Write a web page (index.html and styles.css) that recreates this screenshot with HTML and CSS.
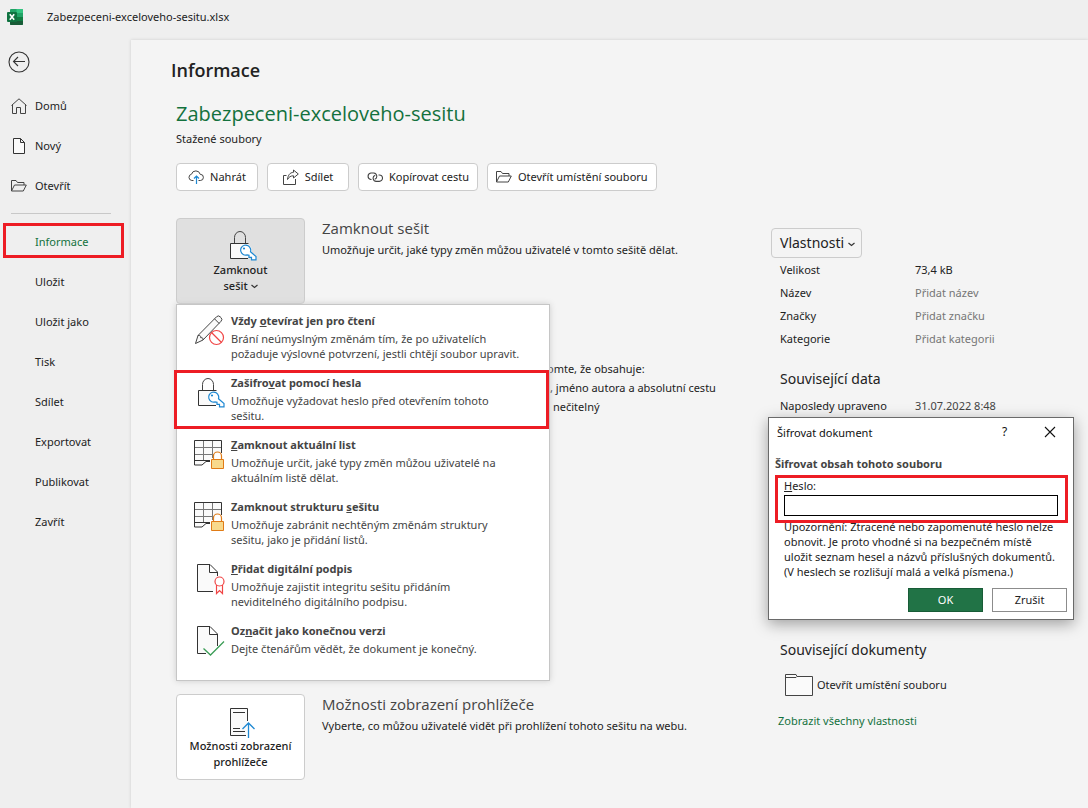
FILE: index.html
```html
<!DOCTYPE html>
<html lang="cs">
<head>
<meta charset="utf-8">
<meta name="viewport" content="width=device-width, initial-scale=1">
<title>Zabezpeceni-exceloveho-sesitu.xlsx</title>
<link rel="stylesheet" href="styles.css">
</head>
<body>
<svg class="defs" aria-hidden="true">
  <symbol id="folder" viewBox="0 0 16 16">
    <path d="M.5 13V2.500h4.500l1.500 2h6.500V7M.5 13L3.500 7h11.800l-3 6z" fill="none" stroke="#444"/>
  </symbol>
  <symbol id="lock-key" viewBox="0 0 28 32">
    <path d="M5.500 13V7.500a5.500 6 0 0 1 11 0V13" fill="none" stroke="#444"/>
    <path d="M19.500 13.500H1.500v15H19" fill="#fafafa" stroke="#333"/>
    <circle cx="16.500" cy="20.500" r="6.500" fill="#fafafa"/>
    <path d="M21.500 18.800a5 5 0 1 0-3.500 6.100l2 .4v2h2.500v2.500h4.500v-3.300L21.500 21.800a5 5 0 0 0 0-3z" fill="#fff" stroke="#1e88d2" stroke-width="1.200"/>
    <circle cx="15" cy="18.500" r="1.100" fill="#1e88d2"/>
  </symbol>
  <symbol id="grid-lock" viewBox="0 0 32 32">
    <path d="M.5 1.500h27v20.500H12l-4 4H.5z" fill="#fafafa"/>
    <path d="M9.500 2v20M18.500 2v20M1 8.500h26M1 15.500h26" fill="none" stroke="#777"/>
    <path d="M27.500 14V1.500H.5V26H8l4-3.500h5M.5 21.500H17" fill="none" stroke="#333"/>
    <path d="M16 19h15v12H16z" fill="#fff"/>
    <path d="M19.500 20.500V17a4 4 0 0 1 8 0v3.500" fill="#fff" stroke="#e07b16" stroke-width="1.200"/>
    <path d="M17.500 20.500h12v9h-12z" fill="#f8d98c" stroke="#e07b16"/>
  </symbol>
</svg>

<header class="titlebar">
  <svg class="logo" viewBox="0 0 16 16" role="img" aria-label="Excel">
    <rect x="3" y="0" width="13" height="16" rx="1" fill="#21a366"/>
    <path d="M3 4h6.500v4H3z" fill="#107c41"/>
    <path d="M9.500 0H15a1 1 0 0 1 1 1v3H9.500z" fill="#33c481"/>
    <path d="M3 8h13v4H3z" fill="#107c41"/>
    <path d="M3 12h13v3a1 1 0 0 1-1 1H4a1 1 0 0 1-1-1z" fill="#185c37"/>
    <rect x="0" y="3" width="10" height="10" rx="1" fill="#0f7340"/>
    <path d="M2.800 5.200l4.400 5.600M7.200 5.200l-4.400 5.600" stroke="#fff" stroke-width="1.600"/>
  </svg>
  <span>Zabezpeceni-exceloveho-sesitu.xlsx</span>
</header>

<div class="shell">
  <nav class="sidebar" aria-label="Soubor">
    <button class="back" type="button" aria-label="Zpět">
      <svg viewBox="0 0 22 22"><circle cx="11" cy="11" r="10" fill="none" stroke="#333" stroke-width="1.100"/><path d="M17 10.500H5.500M10 6L5.500 10.500 10 15" fill="none" stroke="#333" stroke-width="1.100"/></svg>
    </button>
    <a class="nav-item" href="#">
      <svg viewBox="0 0 16 16"><path d="M.5 7.500L8 .8l7.500 6.700M1.500 6.500v9h4V9.500h4v6h5v-9" fill="none" stroke="#444"/></svg>Domů</a>
    <a class="nav-item" href="#">
      <svg viewBox="0 0 16 16"><path d="M2.500.5h7l4 4v11h-11zM9.500.5v4h4" fill="#fafafa" stroke="#333"/></svg>Nový</a>
    <a class="nav-item" href="#"><svg><use href="#folder"/></svg>Otevřít</a>
    <hr class="nav-line">
    <a class="nav-item plain current marked" href="#" aria-current="page">Informace</a>
    <a class="nav-item plain" href="#">Uložit</a>
    <a class="nav-item plain" href="#">Uložit jako</a>
    <a class="nav-item plain" href="#">Tisk</a>
    <a class="nav-item plain" href="#">Sdílet</a>
    <a class="nav-item plain" href="#">Exportovat</a>
    <a class="nav-item plain" href="#">Publikovat</a>
    <a class="nav-item plain" href="#">Zavřít</a>
  </nav>

  <main class="main">
    <h1>Informace</h1>
    <div class="content">
      <h2 class="doc-name">Zabezpeceni-exceloveho-sesitu</h2>
      <p class="doc-place">Stažené soubory</p>
      <div class="actions">
        <button class="action" type="button">
          <svg viewBox="0 0 16 16"><path d="M5.500 11.500H3.800a3.200 3.200 0 0 1-.3-6.300A4.500 4.500 0 0 1 12.200 5.300a3.100 3.100 0 0 1 .2 6.200h-1.900" fill="none" stroke="#444"/><path d="M8.500 15V7M6 9.500L8.500 7 11 9.500" fill="none" stroke="#1e88d2" stroke-width="1.200"/></svg>Nahrát</button>
        <button class="action" type="button">
          <svg viewBox="0 0 16 16"><path d="M3.500 6.500h-3v9h12V10" fill="none" stroke="#444"/><path d="M10.500 1l4.800 4-4.800 4V6.800C7.500 6.800 6 8 4.500 10.500 5 6 7 3.500 10.500 3.300z" fill="#fafafa" stroke="#444"/></svg>Sdílet</button>
        <button class="action" type="button">
          <svg viewBox="0 0 16 16"><path d="M4.500 10.500H3.800a3.300 3.300 0 0 1 0-6.500h3a3.300 3.300 0 0 1 1 6.300M11.500 6h.8a3.200 3.200 0 0 1 0 6.400H9.200a3.200 3.200 0 0 1-1-6.200" fill="none" stroke="#444" stroke-width="1.100"/></svg>Kopírovat cestu</button>
        <button class="action" type="button"><svg><use href="#folder"/></svg>Otevřít umístění souboru</button>
      </div>

      <div class="columns">
        <div class="tasks">
          <section class="task">
            <button class="tile pressed" type="button" aria-haspopup="menu" aria-expanded="true">
              <svg class="lock-icon"><use href="#lock-key"/></svg>
              <span>Zamknout<br>sešit <svg class="chev" viewBox="0 0 7 5"><path d="M.5 1l3 2.500 3-2.500" fill="none" stroke="#333" stroke-width="1.200"/></svg></span>
            </button>
            <div class="task-text">
              <h3>Zamknout sešit</h3>
              <p>Umožňuje určit, jaké typy změn můžou uživatelé v tomto sešitě dělat.</p>
            </div>
            <div class="menu" role="menu">
              <button class="menu-item" type="button" role="menuitem">
                <svg viewBox="0 0 32 32"><path d="M1.500 28.500l2.500-8L22.500 1.800a2.600 2.600 0 0 1 3.700 0l.8.800a2.600 2.600 0 0 1 0 3.700L9 25zM4 20.500c2-.3 3 .5 2.700 2.200 2-.2 2.600.6 2.300 2.300M20.500 3.800l4.700 4.700" fill="#fafafa" stroke="#444"/><circle cx="22.500" cy="22.500" r="7" fill="#fff" stroke="#f04545" stroke-width="1.200"/><path d="M17.500 17.500l10 10" stroke="#f04545" stroke-width="1.200"/></svg>
                <span class="menu-text"><b>Vždy <u>o</u>tevírat jen pro čtení</b><span>Brání neúmyslným změnám tím, že po uživatelích<br>požaduje výslovné potvrzení, jestli chtějí soubor upravit.</span></span>
              </button>
              <button class="menu-item marked" type="button" role="menuitem">
                <svg class="lock-icon"><use href="#lock-key"/></svg>
                <span class="menu-text"><b>Zašifro<u>v</u>at pomocí hesla</b><span>Umožňuje vyžadovat heslo před otevřením tohoto<br>sešitu.</span></span>
              </button>
              <button class="menu-item" type="button" role="menuitem">
                <svg><use href="#grid-lock"/></svg>
                <span class="menu-text"><b><u>Z</u>amknout aktuální list</b><span>Umožňuje určit, jaké typy změn můžou uživatelé na<br>aktuálním listě dělat.</span></span>
              </button>
              <button class="menu-item" type="button" role="menuitem">
                <svg><use href="#grid-lock"/></svg>
                <span class="menu-text"><b>Zamknout strukturu <u>s</u>ešitu</b><span>Umožňuje zabránit nechtěným změnám struktury<br>sešitu, jako je přidání listů.</span></span>
              </button>
              <button class="menu-item" type="button" role="menuitem">
                <svg viewBox="0 0 32 32"><path d="M19 28.500H3.500v-27H16l7.500 7.500v4M15.500 1.500V9.500h8" fill="#fafafa" stroke="#333"/><circle cx="25.500" cy="18.500" r="4.500" fill="#fff" stroke="#f04545" stroke-width="1.200"/><path d="M22.500 22v8.500l3-3 3 3V22" fill="none" stroke="#f04545" stroke-width="1.200"/></svg>
                <span class="menu-text"><b><u>P</u>řidat digitální podpis</b><span>Umožňuje zajistit integritu sešitu přidáním<br>neviditelného digitálního podpisu.</span></span>
              </button>
              <button class="menu-item" type="button" role="menuitem">
                <svg viewBox="0 0 32 32"><path d="M12 28.500H3.500v-27H16l7.500 7.500V21M15.500 1.500V9.500h8" fill="#fafafa" stroke="#333"/><path d="M9.500 23.500l7 6.500L30 16.500" fill="none" stroke="#3c9d57" stroke-width="1.300"/></svg>
                <span class="menu-text"><b>Oz<u>n</u>ačit jako konečnou verzi</b><span>Dejte čtenářům vědět, že dokument je konečný.</span></span>
              </button>
            </div>
          </section>

          <section class="inspect">
            <p>omte, že obsahuje:</p>
            <p class="inset">, jméno autora a absolutní cestu</p>
            <p class="inset-more">nečitelný</p>
          </section>

          <section class="task">
            <button class="tile" type="button">
              <svg viewBox="0 0 28 32"><path d="M18.500 15V2.500h-17v27H17" fill="#fafafa" stroke="#333"/><path d="M4 6.500h12M4 22.500h7M4 25.500h12" fill="none" stroke="#333"/><path d="M19.500 32V17M13.500 23l6-6 6 6" fill="none" stroke="#1e88d2" stroke-width="1.300"/></svg>
              <span>Možnosti zobrazení<br>prohlížeče</span>
            </button>
            <div class="task-text">
              <h3>Možnosti zobrazení prohlížeče</h3>
              <p>Vyberte, co můžou uživatelé vidět při prohlížení tohoto sešitu na webu.</p>
            </div>
          </section>
        </div>

        <aside class="props">
          <button class="props-button" type="button">Vlastnosti <svg class="chev" viewBox="0 0 7 5"><path d="M.5 1l3 2.500 3-2.500" fill="none" stroke="#333" stroke-width="1.200"/></svg></button>
          <table class="facts">
            <tr><th scope="row">Velikost</th><td class="dark">73,4 kB</td></tr>
            <tr><th scope="row">Název</th><td>Přidat název</td></tr>
            <tr><th scope="row">Značky</th><td>Přidat značku</td></tr>
            <tr><th scope="row">Kategorie</th><td>Přidat kategorii</td></tr>
          </table>
          <section class="dates">
            <h3>Související data</h3>
            <table class="facts">
              <tr><th scope="row">Naposledy upraveno</th><td class="date">31.07.2022 8:48</td></tr>
            </table>
          </section>
          <section class="related">
            <h3>Související dokumenty</h3>
            <a class="open-place" href="#">
              <svg viewBox="0 0 28 22"><path d="M.5.500h10.500l1 2h15.500v19H.5z" fill="#fafafa" stroke="#444"/><path d="M.5 3.500h10.500l1-1" fill="none" stroke="#444"/></svg>Otevřít umístění souboru</a>
            <a class="all-props" href="#">Zobrazit všechny vlastnosti</a>
          </section>

          <form class="dialog" role="dialog" aria-labelledby="dialog-title">
            <div class="dialog-bar">
              <span id="dialog-title">Šifrovat dokument</span>
              <button class="bar-button" type="button">?</button>
              <button class="bar-button" type="button" aria-label="Zavřít"><svg viewBox="0 0 12 12"><path d="M1 1l10 10M11 1L1 11" stroke="#111" stroke-width="1.100"/></svg></button>
            </div>
            <div class="dialog-body">
              <h4>Šifrovat obsah tohoto souboru</h4>
              <div class="field marked">
                <label for="password"><u>H</u>eslo:</label>
                <input id="password" type="password">
              </div>
              <p>Upozornění: Ztracené nebo zapomenuté heslo nelze<br>obnovit. Je proto vhodné si na bezpečném místě<br>uložit seznam hesel a názvů příslušných dokumentů.<br>(V heslech se rozlišují malá a velká písmena.)</p>
              <div class="dialog-buttons">
                <button class="primary" type="button">OK</button>
                <button type="button">Zrušit</button>
              </div>
            </div>
          </form>
        </aside>
      </div>
    </div>
  </main>
</div>
</body>
</html>
```
FILE: styles.css
```css
* { box-sizing: border-box; }

body {
  margin: 0;
  min-height: 100vh;
  display: flex;
  flex-direction: column;
  background: #efefef;
  color: #222;
  font: 11px/16px "Noto Sans", "Open Sans", sans-serif;
}

h1, h2, h3, h4, p { margin: 0; font-weight: 400; }
button { font: inherit; color: inherit; cursor: pointer; }
a { color: inherit; text-decoration: none; }
svg { flex: none; width: 16px; height: 16px; }
.defs { display: none; }

/* Title bar */
.titlebar {
  display: flex;
  align-items: center;
  gap: 24px;
  height: 40px;
  padding: 0 7px 7px;
}

.shell { flex: 1; display: flex; }

/* Sidebar */
.sidebar { flex: none; width: 131px; padding-top: 11px; }
.back {
  display: block;
  margin: 0 0 13px 8px;
  padding: 0;
  border: 0;
  background: none;
}
.back svg { display: block; width: 22px; height: 22px; }
.nav-item {
  position: relative;
  display: flex;
  align-items: center;
  gap: 8px;
  height: 40px;
  padding-left: 11px;
}
.nav-item.plain { padding-left: 35px; }
.nav-item.current { color: #13713d; }
.nav-line {
  margin: 7px 20px 8px 11px;
  border: 0;
  border-top: 1px solid #c8c8c8;
}

/* Red frames over highlighted controls */
.marked::after {
  content: "";
  position: absolute;
  border: 3px solid #ed1c24;
  pointer-events: none;
}
.nav-item.marked::after { inset: 1px 7px 4px 3px; }
.menu-item.marked::after { inset: 0 0 3px -3px; }
.field.marked::after { inset: -3px -1px -7px 0; }

/* Main pane */
.main {
  flex: 1;
  min-width: 0;
  padding: 16px 0 28px 40px;
  background: #f4f4f4;
  box-shadow: 0 0 3px #ccc;
}
h1 { font: 600 18px/28px "Open Sans", "Noto Sans", sans-serif; }
.content { padding-left: 5px; }
.doc-name {
  margin-top: 16px;
  color: #13713d;
  font: 400 20px/28px "Open Sans", "Noto Sans", sans-serif;
}
.doc-place { margin-top: 3px; }

.actions { display: flex; flex-wrap: wrap; gap: 9px; margin-top: 16px; }
.action {
  display: flex;
  align-items: center;
  justify-content: center;
  gap: 6px;
  min-width: 82px;
  height: 28px;
  padding: 0 8px;
  border: 1px solid #ccc;
  border-radius: 4px;
  background: #fff;
}

.columns {
  display: grid;
  grid-template-columns: minmax(0, 595fr) minmax(0, 317fr);
  margin-top: 27px;
}

/* Tasks */
.task {
  position: relative;
  display: grid;
  grid-template-columns: 129px 1fr;
  gap: 17px;
}
.tile {
  display: flex;
  flex-direction: column;
  align-items: center;
  justify-content: center;
  height: 86px;
  padding: 1px 0 0;
  border: 1px solid #ccc;
  border-radius: 4px;
  background: #fff;
  font-weight: 500;
}
.tile.pressed { background: #e0e0e0; }
.tile > svg { width: 28px; height: 32px; margin-left: 4px; }
.chev { width: 7px; height: 5px; vertical-align: middle; }
.task-text h3 { font: 400 15px/20px "Open Sans", "Noto Sans", sans-serif; color: #444; }
.task-text p { margin-top: 4px; }

.inspect {
  min-height: 390px;
  padding: 55px 0 0 371px;
  line-height: 19px;
}
.inspect .inset { padding-left: 3px; }
.inspect .inset-more { padding-left: 6px; }

/* Drop-down menu */
.menu {
  position: absolute;
  z-index: 2;
  top: 86px;
  left: 0;
  width: 374px;
  padding-top: 3px;
  border: 1px solid #c6c6c6;
  background: #fff;
  box-shadow: 0 0 6px #ccc;
  color: #444;
}
.menu-item {
  position: relative;
  display: flex;
  align-items: flex-start;
  gap: 5px;
  width: 100%;
  height: 62px;
  padding: 5px 0 0 17px;
  border: 0;
  background: none;
  text-align: left;
}
.menu-item svg { width: 32px; height: 32px; margin-top: 2px; }
.menu-item .lock-icon { padding-left: 2px; }
.menu-text > b { display: block; font-weight: 700; }
.menu-text > span { display: block; margin-top: 2px; line-height: 15px; white-space: nowrap; }

/* Properties */
.props { position: relative; padding-top: 10px; }
.props-button {
  height: 30px;
  padding: 0 6px 0 8px;
  border: 1px solid #ccc;
  border-radius: 4px;
  background: #f4f4f4;
  font-size: 14px;
}
.facts { width: 100%; margin-left: 9px; border-collapse: collapse; }
.facts th { width: 135px; height: 23px; padding: 0; font-weight: 400; text-align: left; }
.facts td { padding: 0; color: #767676; }
.facts .dark { color: #222; }
.facts .date { color: #444; }
.props h3 { padding-left: 9px; font-size: 14px; line-height: 24px; }
.dates { min-height: 271px; margin-top: 17px; }
.dates .facts { margin-top: 3px; }
.open-place { display: flex; align-items: center; gap: 4px; margin: 12px 0 0 14px; }
.open-place svg { width: 28px; height: 22px; }
.all-props { display: inline-block; margin: 17px 0 0 7px; color: #13713d; }

/* Password dialog */
.dialog {
  position: absolute;
  z-index: 3;
  top: 199px;
  left: -3px;
  width: 306px;
  border: 1px solid #6a6a6a;
  background: #fff;
  box-shadow: 0 4px 14px rgba(0, 0, 0, .35);
}
.dialog-bar { display: flex; align-items: center; height: 30px; padding: 0 1px 0 8px; color: #111; }
.dialog-bar span { flex: 1; }
.bar-button {
  display: grid;
  place-items: center;
  width: 45px;
  height: 30px;
  padding: 0 0 2px;
  border: 0;
  background: none;
  font-size: 12px;
}
.bar-button svg { width: 12px; height: 12px; }
.dialog-body { padding: 8px 6px 7px; }
.dialog h4 { font-weight: 700; color: #444; }
.field { position: relative; margin-top: 6px; padding: 0 9px; }
.field label { display: block; }
.field input {
  display: block;
  width: 100%;
  height: 21px;
  margin-top: 1px;
  padding: 0 4px;
  border: 1px solid #000;
  border-radius: 0;
  background: #fff;
  font: inherit;
}
.dialog p { margin: 3px 0 0 9px; line-height: 15px; white-space: nowrap; }
.dialog-buttons { display: flex; justify-content: flex-end; gap: 9px; margin-top: 9px; }
.dialog-buttons button {
  width: 75px;
  height: 24px;
  padding: 0;
  border: 1px solid #8c8c8c;
  background: #fff;
}
.dialog-buttons .primary { border-color: #185c37; background: #217346; color: #fff; }
```
